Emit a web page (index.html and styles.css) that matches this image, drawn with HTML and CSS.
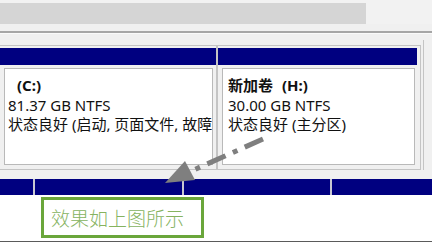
FILE: index.html
```html
<!DOCTYPE html>
<html lang="zh-CN">
<head>
<meta charset="utf-8">
<title>磁盘管理</title>
<link rel="stylesheet" href="styles.css">
</head>
<body>
<div class="page">
  <div class="top"><div class="band"></div></div>
  <div class="rule"></div>
  <div class="disk">
    <div class="part part-c">
      <div class="hdr"></div>
      <div class="vol vol-c">
        <div class="name name-c">(C:)</div>
        <div class="line">81.37 GB NTFS</div>
        <div class="line">状态良好 (启动, 页面文件, 故障</div>
      </div>
    </div>
    <div class="part part-h">
      <div class="hdr"></div>
      <div class="vol vol-h">
        <div class="name">新加卷 <span class="drive">(H:)</span></div>
        <div class="line">30.00 GB NTFS</div>
        <div class="line">状态良好 (主分区)</div>
      </div>
    </div>
    <div class="edge"></div>
  </div>
  <div class="disk2">
    <div class="seg"></div>
    <div class="seg"></div>
    <div class="seg"></div>
    <div class="seg"></div>
  </div>
  <div class="bottom">
    <div class="note">效果如上图所示</div>
  </div>
  <svg class="arrow" width="432" height="242" viewBox="0 0 432 242">
    <path d="M263 139 L193.6 170" stroke="#7f7f7f" stroke-width="5" stroke-dasharray="20 8 5 8" fill="none"/>
    <polygon points="165,183 185,161 195,180" fill="#7f7f7f"/>
  </svg>
</div>
</body>
</html>
```
FILE: styles.css
```css
* { box-sizing: border-box; }
html, body { margin: 0; padding: 0; }
body {
  width: 432px;
  height: 242px;
  overflow: hidden;
  background: #f0f0f0;
  font-family: "Noto Sans", "Noto Sans CJK SC", sans-serif;
}
.page {
  position: relative;
  width: 432px;
  height: 242px;
  overflow: hidden;
}
.top {
  height: 24px;
  padding-top: 3px;
  background: #f2f2f2;
}
.band {
  width: 366px;
  height: 21px;
  background: #d5d5d5;
}
.rule {
  margin-top: 7px;
  height: 3px;
  border-top: 2px solid #a6a6a6;
  border-bottom: 1px solid #fafafa;
}
.disk {
  display: flex;
  margin-top: 11px;
  height: 125px;
}
.part {
  display: flex;
  flex-direction: column;
  border: 1px solid #c4c4c4;
  padding-top: 2px;
  padding-bottom: 4px;
}
.part-c {
  width: 220px;
  margin-left: -3px;
  padding-left: 2px;
  padding-right: 0;
}
.part-h {
  width: 204px;
  padding-left: 0;
  padding-right: 3px;
}
.edge {
  width: 3px;
  margin-top: -5px;
  border-right: 1px solid #c4c4c4;
}
.hdr {
  height: 17px;
  background: #000080;
  flex: none;
}
.vol {
  flex: 1;
  margin-top: 3px;
  background: #fff;
  border: 1px solid #b9b9b9;
  overflow: hidden;
  white-space: nowrap;
  font-size: 15px;
  line-height: 19.5px;
  color: #111;
  padding-top: 7px;
}
.vol-c { margin-left: 4px; margin-right: 3px; padding-left: 3px; }
.vol-h { margin-left: 4px; margin-right: 2px; padding-left: 5px; }
.line { overflow: hidden; }
.name { font-weight: bold; }
.name-c { padding-left: 9px; }
.drive { margin-left: 5px; }
.disk2 {
  display: grid;
  grid-template-columns: 33px 147px 146px 1fr;
  column-gap: 2px;
  margin-top: 9px;
  height: 16px;
  background: #c8c8d2;
}
.seg { background: #000080; }
.bottom {
  height: 47px;
  background: #fff;
  border-bottom: 1px solid #5a5a5a;
  padding-top: 2px;
  padding-left: 41px;
}
.note {
  width: 163px;
  height: 41px;
  border: 3px solid #6aa63b;
  background: #fff;
  color: #86b35f;
  font-family: "Noto Sans CJK SC", sans-serif;
  font-weight: 300;
  font-size: 19px;
  line-height: 35px;
  padding-left: 7px;
  white-space: nowrap;
}
.arrow {
  position: absolute;
  left: 0;
  top: 0;
  pointer-events: none;
}
```
